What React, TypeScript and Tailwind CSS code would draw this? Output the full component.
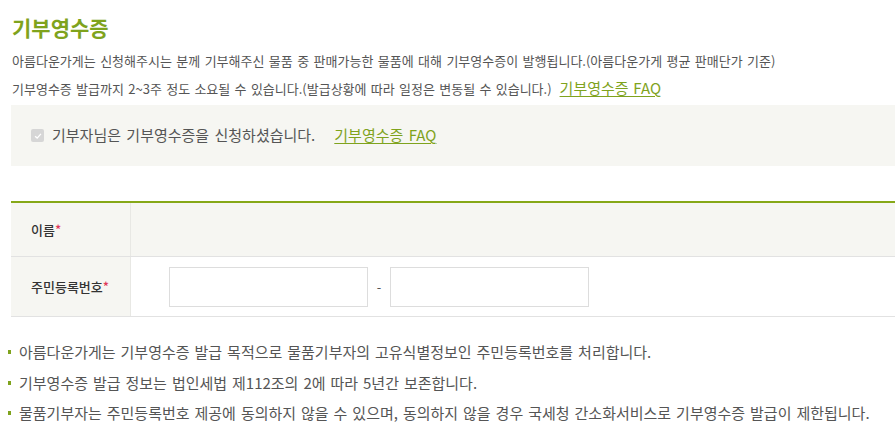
const font = "font-['Noto_Sans_CJK_KR','Noto_Sans',sans-serif]";

const notes = [
    "아름다운가게는 기부영수증 발급 목적으로 물품기부자의 고유식별정보인 주민등록번호를 처리합니다.",
    "기부영수증 발급 정보는 법인세법 제112조의 2에 따라 5년간 보존합니다.",
    "물품기부자는 주민등록번호 제공에 동의하지 않을 수 있으며, 동의하지 않을 경우 국세청 간소화서비스로 기부영수증 발급이 제한됩니다.",
];

export default function App() {
    return (
        <div className={`${font} w-[895px] h-[444px] overflow-hidden bg-white text-[#555]`}>
            <div className="pl-[11px]">
                <h1 className="pt-[12px] pl-px text-[21px] leading-[30px] font-bold text-[#7fa31d]">기부영수증</h1>
                <p className="mt-[5px] pl-px text-[13px] leading-[27px] [word-spacing:1.5px]">
                    아름다운가게는 신청해주시는 분께 기부해주신 물품 중 판매가능한 물품에 대해 기부영수증이 발행됩니다.(아름다운가게 평균 판매단가 기준)
                </p>
                <p className="pl-px text-[13px] leading-[27px] [word-spacing:1.4px]">
                    기부영수증 발급까지 2~3주 정도 소요될 수 있습니다.(발급상황에 따라 일정은 변동될 수 있습니다.)
                    <a href="#" className="ml-[8px] text-[15px] text-[#7fa31d] underline underline-offset-2">기부영수증 FAQ</a>
                </p>

                <div className="mt-[3px] h-[61px] bg-[#f6f6f2] flex items-center pl-[20px] [word-spacing:2px]">
                    <span className="w-[13px] h-[13px] rounded-[2px] bg-[#d6d6d6] flex items-center justify-center">
                        <svg viewBox="0 0 12 12" className="w-[10px] h-[10px]">
                            <path d="M2.5 6.2 L5 8.5 L9.5 3.5" fill="none" stroke="#fff" strokeWidth="1.6" />
                        </svg>
                    </span>
                    <span className="ml-[8px] text-[15px] text-[#555]">기부자님은 기부영수증을 신청하셨습니다.</span>
                    <a href="#" className="ml-[19px] text-[15px] text-[#7fa31d] underline underline-offset-2">기부영수증 FAQ</a>
                </div>

                <div className="mt-[35px] border-t-2 border-[#86a818]">
                    <div className="flex h-[54px] bg-[#f6f6f2] border-b border-[#e2e2e2]">
                        <div className="w-[120px] border-r border-[#e8e8e4] flex items-center pl-[20px] text-[13px] font-medium text-[#333]">
                            이름<span className="text-[#e0395a]">*</span>
                        </div>
                        <div className="flex-1" />
                    </div>
                    <div className="flex h-[60px] border-b border-[#e2e2e2]">
                        <div className="w-[120px] bg-[#f6f6f2] border-r border-[#e8e8e4] flex items-center pl-[20px] text-[13px] font-medium text-[#333]">
                            주민등록번호<span className="text-[#e0395a]">*</span>
                        </div>
                        <div className="flex-1 flex items-center pl-[38px]">
                            <input className="w-[199px] h-[40px] border border-[#ddd] bg-white" />
                            <span className="w-[22px] text-center text-[13px] text-[#555]">-</span>
                            <input className="w-[199px] h-[40px] border border-[#ddd] bg-white" />
                        </div>
                    </div>
                </div>
            </div>

            <ul className="mt-[20px] pl-[8px] flex flex-col">
                {notes.map((n) => (
                    <li key={n} className="flex items-center h-[30.5px] text-[15px] text-[#555] [word-spacing:1.6px]">
                        <span className="w-[3px] h-[4px] bg-[#7fa31d] mr-[8px]" />
                        {n}
                    </li>
                ))}
            </ul>
        </div>
    );
}
